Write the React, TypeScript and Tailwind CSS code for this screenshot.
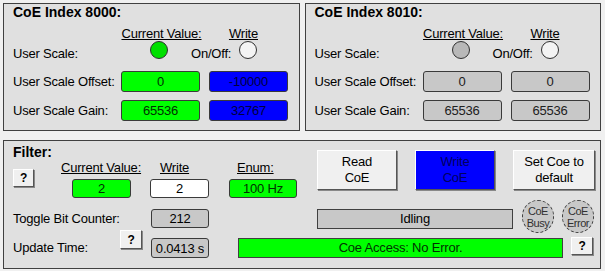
import React from "react";

const font = { fontFamily: '"Liberation Sans", Arial, sans-serif' };

function ValueBox({ value, color, width }: { value: string; color: string; width: string }) {
  return (
    <div
      className={`${width} ${color} flex items-center justify-center rounded-[3px] border border-[#3a3a3a] text-[13px] leading-none`}
    >
      {value}
    </div>
  );
}

function Lamp({ color }: { color: string }) {
  return <div className={`h-[18px] w-[18px] rounded-full border border-[#303030] ${color}`} />;
}

function HelpButton({ className = "" }: { className?: string }) {
  return (
    <button
      className={`flex items-center justify-center border border-t-white border-l-white border-r-[#555] border-b-[#555] bg-[#f0f0f0] text-[12px] font-bold leading-none shadow-[1px_1px_0_#888] ${className}`}
    >
      ?
    </button>
  );
}

function CoePanel({
  title,
  active,
  offset,
  gain,
}: {
  title: string;
  active: boolean;
  offset: [string, string];
  gain: [string, string];
}) {
  const cur = active ? "bg-[#00ff00] text-[#003000]" : "bg-[#c8c8c8] text-[#202020]";
  const wr = active ? "bg-[#0000ff] text-[#000040]" : "bg-[#c8c8c8] text-[#202020]";
  return (
    <div className="h-[128px] flex-1 border border-[#404040] bg-[#e0e0e0] pl-[9px] pt-[1px] text-[13px] tracking-[-0.2px] whitespace-nowrap">
      <p className="text-[14px] font-bold leading-[15px] tracking-normal">{title}</p>
      <div className="mt-[6px] flex leading-[15px]">
        <div className="w-[107px]" />
        <p className="w-[83px] text-center underline">Current Value:</p>
        <p className="ml-[25px] w-[31px] text-center underline">Write</p>
      </div>
      <div className="flex h-[18px] items-start">
        <p className="mt-[5px] w-[137px] leading-[15px]">User Scale:</p>
        <Lamp color={active ? "bg-[#00e000]" : "bg-[#b8b8b8]"} />
        <p className="ml-[23px] mt-[5px] w-[48px] leading-[15px]">On/Off:</p>
        <Lamp color="bg-[#f4f4f4]" />
      </div>
      <div className="mt-[12px] flex h-[21px] items-center">
        <p className="w-[108px]">User Scale Offset:</p>
        <ValueBox value={offset[0]} color={cur} width="w-[79px] h-[21px]" />
        <div className="w-[9px]" />
        <ValueBox value={offset[1]} color={wr} width="w-[79px] h-[21px]" />
      </div>
      <div className="mt-[8px] flex h-[21px] items-center">
        <p className="w-[108px]">User Scale Gain:</p>
        <ValueBox value={gain[0]} color={cur} width="w-[79px] h-[21px]" />
        <div className="w-[9px]" />
        <ValueBox value={gain[1]} color={wr} width="w-[79px] h-[21px]" />
      </div>
    </div>
  );
}

function BigButton({ label, color }: { label: React.ReactNode; color: string }) {
  return (
    <button
      className={`flex h-[40px] items-center justify-center border border-t-white border-l-white border-r-[#555] border-b-[#555] text-[13px] leading-[16px] shadow-[1px_1px_0_#888] ${color}`}
    >
      <span className="text-center">{label}</span>
    </button>
  );
}

function StatusLamp({ top, bottom }: { top: string; bottom: string }) {
  return (
    <div className="flex h-[33px] w-[32px] flex-col items-center justify-center rounded-full border border-dashed border-[#404040] bg-[#c8c8c8] text-[11px] leading-[12px] tracking-[-0.5px] text-[#303030]">
      <span>{top}</span>
      <span>{bottom}</span>
    </div>
  );
}

export default function App() {
  return (
    <div className="h-[271px] w-[605px] bg-[#f0f0f0] pl-[3px] pr-[4px] pt-[3px] text-black" style={font}>
      <div className="flex gap-[5px]">
        <CoePanel title="CoE Index 8000:" active offset={["0", "-10000"]} gain={["65536", "32767"]} />
        <CoePanel title="CoE Index 8010:" active={false} offset={["0", "0"]} gain={["65536", "65536"]} />
      </div>

      <div className="mt-[9px] h-[129px] border border-[#404040] bg-[#e0e0e0] pl-[9px] text-[13px] tracking-[-0.2px] whitespace-nowrap">
        <div className="flex h-[89px]">
          {/* left block */}
          <div className="w-[304px]">
            <p className="mt-[4px] text-[14px] font-bold leading-[15px] tracking-normal">Filter:</p>
            <div className="flex leading-[15px]">
              <HelpButton className="mt-[9px] h-[18px] w-[21px]" />
              <div className="ml-[27px] w-[82px]">
                <p className="underline">Current Value:</p>
                <ValueBox value="2" color="bg-[#00ff00] text-[#003000]" width="mt-[4px] ml-[11px] w-[59px] h-[19px]" />
              </div>
              <div className="ml-[7px] w-[59px]">
                <p className="pl-[10px] underline">Write</p>
                <ValueBox value="2" color="bg-white" width="mt-[4px] w-[59px] h-[19px]" />
              </div>
              <div className="ml-[20px] w-[68px]">
                <p className="pl-[8px] underline">Enum:</p>
                <ValueBox value="100 Hz" color="bg-[#00ff00] text-[#003000]" width="mt-[4px] w-[68px] h-[19px]" />
              </div>
            </div>
            <div className="mt-[11px] flex h-[19px] items-center">
              <p className="w-[138px]">Toggle Bit Counter:</p>
              <ValueBox value="212" color="bg-[#c8c8c8]" width="w-[58px] h-[19px]" />
            </div>
          </div>

          {/* right block */}
          <div className="mt-[9px] flex-1">
            <div className="flex gap-[18px]">
              <div className="w-[80px]">
                <BigButton label={<>Read<br />CoE</>} color="w-full bg-[#f0f0f0]" />
              </div>
              <div className="w-[80px]">
                <BigButton label={<>Write<br />CoE</>} color="w-full bg-[#0000ff] text-[#000060]" />
              </div>
              <div className="w-[82px]">
                <BigButton label={<>Set Coe to<br />default</>} color="w-full bg-[#f0f0f0]" />
              </div>
            </div>
            <div className="mt-[10px] flex">
              <div className="mt-[9px] flex h-[20px] w-[196px] items-center justify-center border border-[#404040] bg-[#c8c8c8]">
                Idling
              </div>
              <div className="ml-[9px]">
                <StatusLamp top="CoE" bottom="Busy" />
              </div>
              <div className="ml-[8px]">
                <StatusLamp top="CoE" bottom="Error" />
              </div>
            </div>
          </div>
        </div>

        {/* bottom row */}
        <div className="flex">
          <p className="mt-[10px] w-[107px] leading-[15px]">Update Time:</p>
          <HelpButton className="h-[19px] w-[22px]" />
          <ValueBox value="0.0413 s" color="bg-[#c8c8c8]" width="ml-[9px] mt-[8px] w-[58px] h-[20px]" />
          <div className="ml-[29px] mt-[8px] flex h-[20px] w-[325px] items-center justify-center border border-[#404040] bg-[#00ff00] text-[#003000]">
            Coe Access: No Error.
          </div>
          <HelpButton className="ml-[8px] mt-[7px] h-[18px] w-[22px]" />
        </div>
      </div>
    </div>
  );
}
